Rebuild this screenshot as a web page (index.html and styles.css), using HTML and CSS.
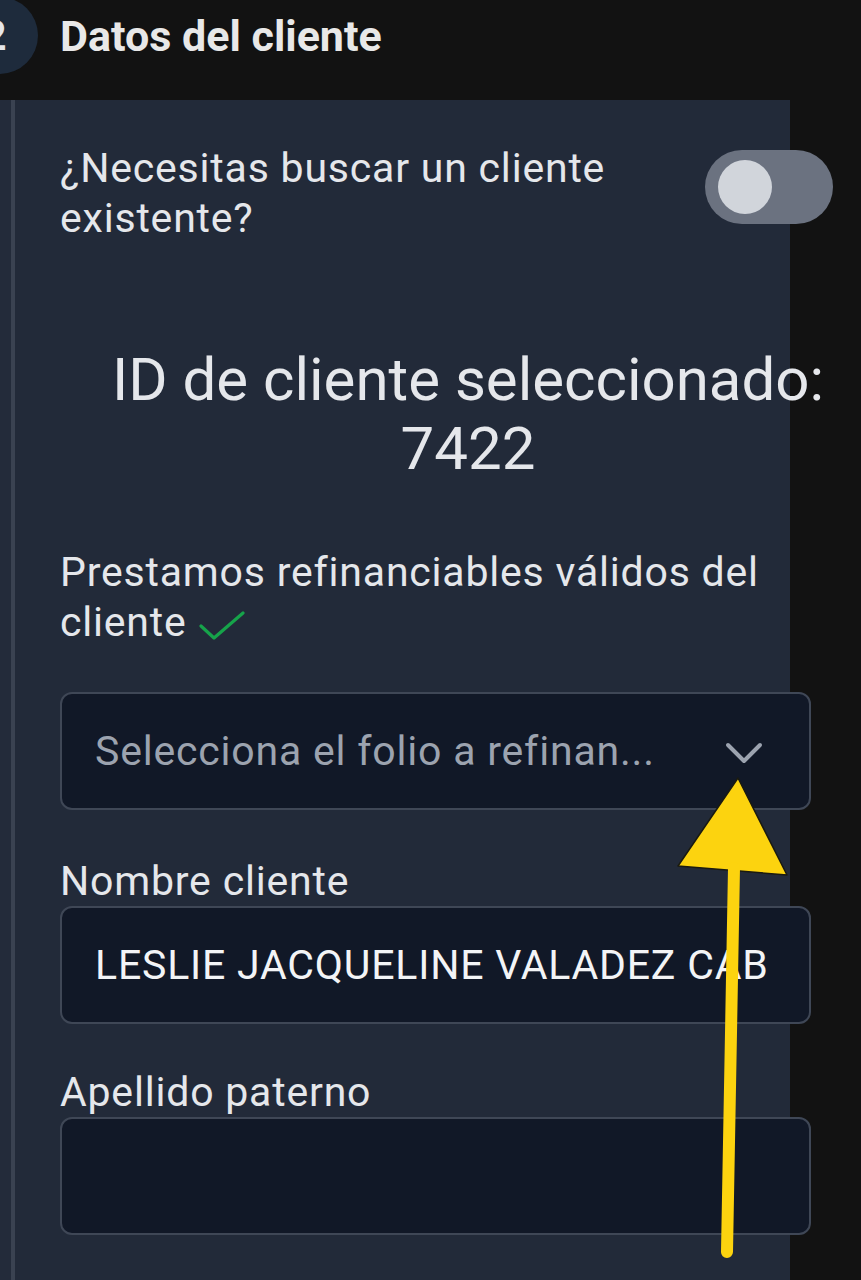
FILE: index.html
```html
<!DOCTYPE html>
<html lang="es">
<head>
<meta charset="utf-8">
<title>Datos del cliente</title>
<link rel="stylesheet" href="styles.css">
</head>
<body>
<div class="screen">
  <header class="step-header">
    <div class="step-num"><span>2</span></div>
    <h1 class="step-title">Datos del cliente</h1>
  </header>
  <section class="panel">
    <div class="content">
      <div class="toggle-row">
        <p class="toggle-label">¿Necesitas buscar un cliente existente?</p>
        <div class="toggle"><div class="knob"></div></div>
      </div>
      <h2 class="client-id">ID de cliente seleccionado:<br>7422</h2>
      <p class="loans-label">Prestamos refinanciables válidos del cliente <svg class="check" width="48" height="30" viewBox="0 0 48 30"><polyline points="3,16 16,28 45,3" fill="none" stroke="#16a34a" stroke-width="3.2" stroke-linecap="round" stroke-linejoin="round"/></svg></p>
      <div class="field select">
        <span class="placeholder">Selecciona el folio a refinan...</span>
        <svg class="chevron" width="40" height="24" viewBox="0 0 40 24"><polyline points="3,4 19,20 35,4" fill="none" stroke="#9ca3af" stroke-width="4" stroke-linecap="round" stroke-linejoin="round"/></svg>
      </div>
      <label class="field-label">Nombre cliente</label>
      <div class="field"><span class="value">LESLIE JACQUELINE VALADEZ CAB</span></div>
      <label class="field-label second">Apellido paterno</label>
      <div class="field"></div>
    </div>
  </section>
  <svg class="annotation" width="861" height="1280" viewBox="0 0 861 1280">
    <polygon points="738,778 678,866 787,875" fill="#fcd30f" stroke="#1a1a10" stroke-width="1.5" stroke-linejoin="round"/>
    <line x1="734" y1="868" x2="727" y2="1252" stroke="#fcd30f" stroke-width="12" stroke-linecap="round"/>
  </svg>
</div>
</body>
</html>
```
FILE: styles.css
```css
* { box-sizing: border-box; }
html, body { margin: 0; padding: 0; }
body {
  background: #121212;
  font-family: Roboto, "Liberation Sans", sans-serif;
  color: #e5e7eb;
  overflow: hidden;
}
.screen {
  position: relative;
  width: 861px;
  height: 1280px;
  overflow: hidden;
  background: #121212;
}
.step-header {
  height: 100px;
  display: flex;
  align-items: flex-start;
  gap: 22px;
  margin-left: -39px;
}
.step-num {
  width: 77px;
  height: 77px;
  border-radius: 50%;
  background: #1e2b3c;
  margin-top: -3px;
  display: flex;
  align-items: center;
  justify-content: center;
  flex-shrink: 0;
}
.step-num span {
  font-size: 42px;
  font-weight: 700;
  color: #e5e7eb;
  margin-left: -10px;
}
.step-title {
  margin: 11px 0 0 0;
  font-size: 43px;
  font-weight: 700;
  line-height: 50px;
  color: #e8e8e8;
}
.panel {
  width: 790px;
  height: 1180px;
  background: linear-gradient(to right, #232b3a 11px, #3a4251 11px, #3a4251 15px, #222a39 15px);
  padding: 43px 0 0 60px;
}
.content {
  width: 751px;
  display: flex;
  flex-direction: column;
}
.toggle-row {
  display: flex;
  justify-content: space-between;
  align-items: flex-start;
  margin-right: -22px;
}
.toggle-label {
  margin: 0;
  width: 620px;
  font-size: 41px;
  letter-spacing: 0.8px;
  line-height: 50px;
  color: #e5e7eb;
}
.toggle {
  width: 128px;
  height: 74px;
  border-radius: 37px;
  background: #6b7280;
  margin-top: 7px;
  display: flex;
  align-items: center;
  padding-left: 13px;
  flex-shrink: 0;
}
.knob {
  width: 54px;
  height: 54px;
  border-radius: 50%;
  background: #d1d5db;
}
.client-id {
  margin: 102px -65px 0 0;
  text-align: center;
  font-size: 60px;
  font-weight: 400;
  line-height: 69px;
  color: #e5e7eb;
}
.loans-label {
  margin: 64px 0 0 0;
  font-size: 41px;
  letter-spacing: 0.8px;
  line-height: 50px;
  color: #e5e7eb;
}
.check { vertical-align: -4px; margin-left: 0; }
.field {
  height: 118px;
  border: 2px solid #3f4756;
  border-radius: 12px;
  background: #111827;
  display: flex;
  align-items: center;
  padding: 0 33px;
  overflow: hidden;
}
.select {
  margin-top: 45px;
  justify-content: space-between;
}
.placeholder {
  font-size: 41px;
  letter-spacing: 0.8px;
  color: #9ca3af;
}
.chevron { margin-right: 11px; margin-top: 4px; }
.value {
  font-size: 41px;
  letter-spacing: 0.8px;
  color: #f3f4f6;
  white-space: nowrap;
}
.field-label {
  display: block;
  margin-top: 46px;
  font-size: 41px;
  letter-spacing: 0.8px;
  line-height: 50px;
  color: #e5e7eb;
}
.field-label.second { margin-top: 43px; }
.annotation {
  position: absolute;
  left: 0;
  top: 0;
  pointer-events: none;
}
```
